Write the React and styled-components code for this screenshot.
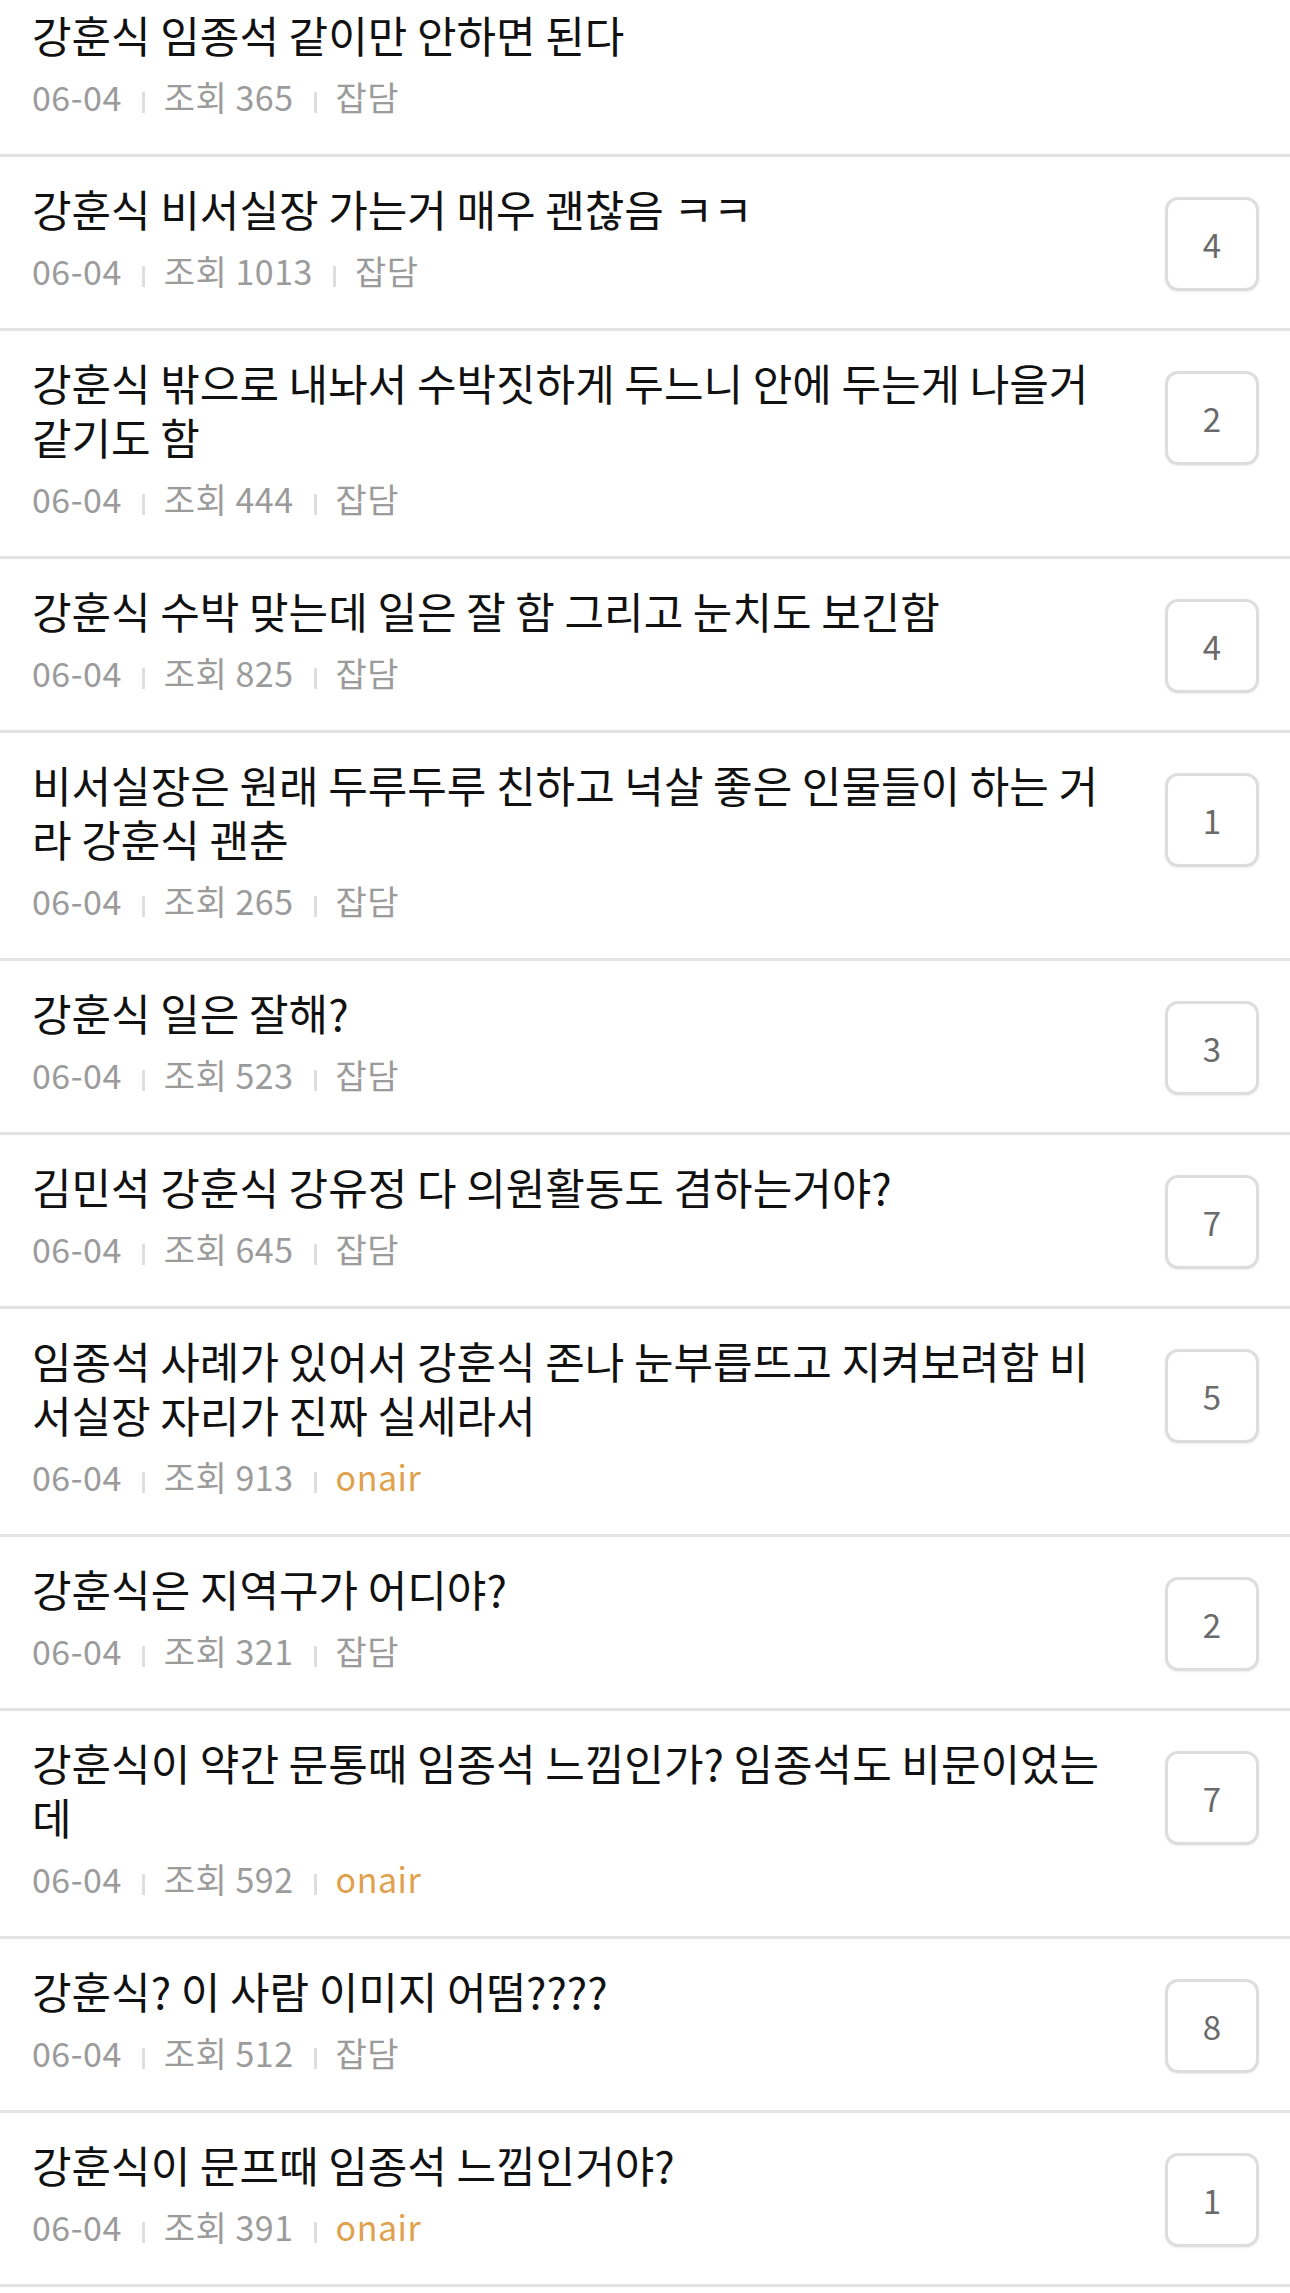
import React from 'react'
import styled, { createGlobalStyle } from 'styled-components'

const posts = [
	{ id: 1, title: '강훈식 임종석 같이만 안하면 된다', views: 365, board: '잡담' },
	{ id: 2, title: '강훈식 비서실장 가는거 매우 괜찮음 ㅋㅋ', views: 1013, board: '잡담', comments: 4 },
	{ id: 3, title: '강훈식 밖으로 내놔서 수박짓하게 두느니 안에 두는게 나을거 같기도 함', views: 444, board: '잡담', comments: 2 },
	{ id: 4, title: '강훈식 수박 맞는데 일은 잘 함 그리고 눈치도 보긴함', views: 825, board: '잡담', comments: 4 },
	{ id: 5, title: '비서실장은 원래 두루두루 친하고 넉살 좋은 인물들이 하는 거라 강훈식 괜춘', views: 265, board: '잡담', comments: 1 },
	{ id: 6, title: '강훈식 일은 잘해?', views: 523, board: '잡담', comments: 3 },
	{ id: 7, title: '김민석 강훈식 강유정 다 의원활동도 겸하는거야?', views: 645, board: '잡담', comments: 7 },
	{ id: 8, title: '임종석 사례가 있어서 강훈식 존나 눈부릅뜨고 지켜보려함 비서실장 자리가 진짜 실세라서', views: 913, board: 'onair', comments: 5 },
	{ id: 9, title: '강훈식은 지역구가 어디야?', views: 321, board: '잡담', comments: 2 },
	{ id: 10, title: '강훈식이 약간 문통때 임종석 느낌인가? 임종석도 비문이었는데', views: 592, board: 'onair', comments: 7 },
	{ id: 11, title: '강훈식? 이 사람 이미지 어떰????', views: 512, board: '잡담', comments: 8 },
	{ id: 12, title: '강훈식이 문프때 임종석 느낌인거야?', views: 391, board: 'onair', comments: 1 },
]

const PostList = () => (
	<List>
		{posts.map(({ id, title, views, board, comments }) => (
			<Row key={id}>
				<Body>
					<Title>{title}</Title>
					<Meta>
						<span>06-04</span>
						<Divider />
						<span>조회 {views}</span>
						<Divider />
						<Board $onair={board === 'onair'}>{board}</Board>
					</Meta>
				</Body>
				{comments ? <CommentCount>{comments}</CommentCount> : null}
			</Row>
		))}
	</List>
)

const App = () => (
	<>
		<GlobalStyle />
		<PostList />
	</>
)

const GlobalStyle = createGlobalStyle`
	html, body {
		margin: 0;
		padding: 0;
		background: #ffffff;
		overflow: hidden;
	}
	body {
		font-family: "Noto Sans CJK KR", "Noto Sans", sans-serif;
	}
`

const List = styled.ul`
	list-style: none;
	margin: -17px 0 0;
	padding: 0;
`

const Row = styled.li`
	display: flex;
	align-items: flex-start;
	padding: 24px 31px 36px 32px;
	border-bottom: 3px solid #e3e3e3;
`

const Body = styled.div`
	flex: 1;
	min-width: 0;
	max-width: 1080px;
	margin-right: auto;
`

const Title = styled.div`
	font-size: 43px;
	line-height: 54px;
	color: #111111;
	line-break: anywhere;
`

const Meta = styled.div`
	display: flex;
	align-items: center;
	margin-top: 13px;
	height: 44px;
	font-size: 34px;
	letter-spacing: 0.5px;
	color: #9b9b9b;
	white-space: nowrap;
`

const Divider = styled.i`
	display: inline-block;
	width: 3px;
	height: 21px;
	margin: 12px 19px 0 20px;
	background: #dedede;
`

const Board = styled.span`
	color: ${({ $onair }) => ($onair ? '#e0a04c' : '#9b9b9b')};
`

const CommentCount = styled.div`
	flex: none;
	display: flex;
	align-items: center;
	justify-content: center;
	box-sizing: border-box;
	width: 94px;
	height: 94px;
	margin-top: 16px;
	border: 3px solid #dddddd;
	border-radius: 13px;
	box-shadow: 0 1px 2px rgba(0, 0, 0, 0.08);
	font-size: 33px;
	color: #6a6a6a;
`

export default App
